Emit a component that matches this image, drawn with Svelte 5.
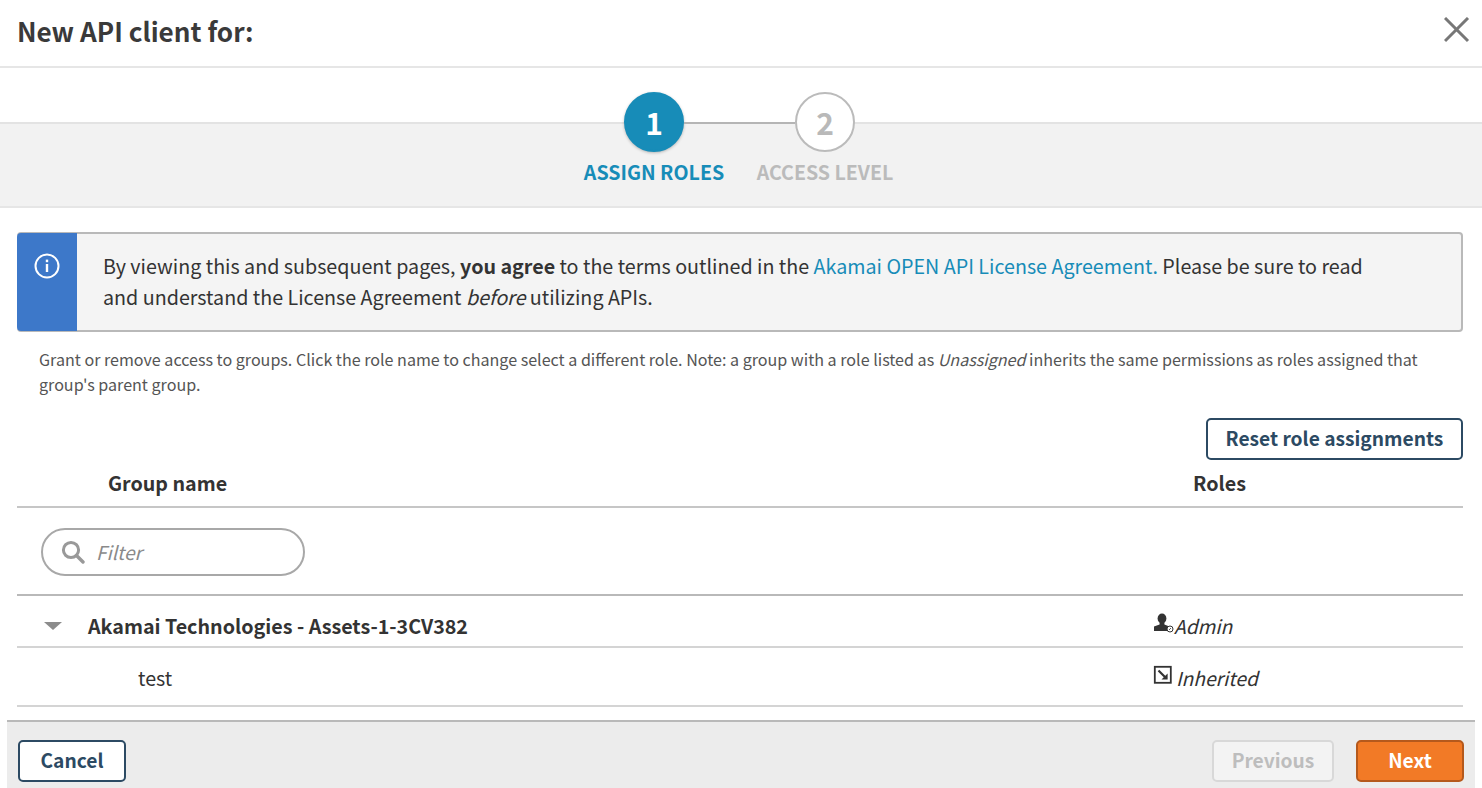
<script>
  const groups = [
    { name: "Akamai Technologies - Assets-1-3CV382", role: "Admin", parent: true },
    { name: "test", role: "Inherited", parent: false }
  ];
</script>

<div class="modal">
  <header class="top">
    <h1>New API client for:</h1>
    <svg class="close" width="26" height="26" viewBox="0 0 26 26" aria-label="Close">
      <path d="M1 1 L24 24 M24 1 L1 24" stroke="#777" stroke-width="3" fill="none" />
    </svg>
  </header>

  <div class="stepper">
    <div class="step active">
      <div class="circle">1</div>
      <div class="label">ASSIGN ROLES</div>
    </div>
    <div class="link"></div>
    <div class="step">
      <div class="circle">2</div>
      <div class="label">ACCESS LEVEL</div>
    </div>
  </div>

  <div class="content">
    <div class="alert">
      <div class="alert-icon">
        <svg width="26" height="26" viewBox="0 0 26 26">
          <circle cx="13" cy="13" r="11.5" stroke="#fff" stroke-width="2" fill="none" />
          <rect x="11.8" y="11" width="2.4" height="8" fill="#fff" />
          <rect x="11.8" y="6.6" width="2.4" height="2.6" fill="#fff" />
        </svg>
      </div>
      <p>
        By viewing this and subsequent pages, <b>you agree</b> to the terms outlined in the
        <a href="#top">Akamai OPEN API License Agreement.</a> Please be sure to read<br />
        and understand the License Agreement <i>before</i> utilizing APIs.
      </p>
    </div>

    <p class="hint">
      Grant or remove access to groups. Click the role name to change select a different role. Note: a group with a role listed as <i>Unassigned</i> inherits the same permissions as roles assigned that group's parent group.
    </p>

    <div class="actions">
      <button class="btn outline reset">Reset role assignments</button>
    </div>

    <div class="thead">
      <div class="col-name">Group name</div>
      <div class="col-role">Roles</div>
    </div>

    <div class="filter-row">
      <div class="filter">
        <svg width="24" height="24" viewBox="0 0 24 24">
          <circle cx="10" cy="10" r="7.6" stroke="#999" stroke-width="3" fill="none" />
          <path d="M15.5 15.5 L22 22" stroke="#999" stroke-width="3.4" stroke-linecap="round" />
        </svg>
        <span>Filter</span>
      </div>
    </div>

    {#each groups as g}
      <div class="row" class:parent={g.parent}>
        {#if g.parent}
          <span class="caret"></span>
        {/if}
        <div class="name">{g.name}</div>
        <div class="role">
          {#if g.parent}
            <svg width="21" height="20" viewBox="0 0 21 20">
              <ellipse cx="9" cy="5.5" rx="4.4" ry="5" fill="#333" />
              <path d="M6.6 9 h4.8 v2.4 l5 2 V18 H1 v-4.6 l5.6 -2 z" fill="#333" />
              <circle cx="17" cy="16" r="3" fill="#fff" stroke="#333" stroke-width="1" />
              <path d="M16 17 L18 15" stroke="#333" stroke-width="0.8" />
            </svg>
          {:else}
            <svg class="inherit" width="20" height="20" viewBox="0 0 20 20">
              <rect x="1.8" y="1.8" width="16" height="16" fill="none" stroke="#333" stroke-width="1.8" />
              <path d="M5.5 5.5 L12.5 12.5" stroke="#333" stroke-width="2.2" />
              <path d="M14.6 8.5 V14.6 H8.5 z" fill="#333" />
            </svg>
          {/if}
          <i>{g.role}</i>
        </div>
      </div>
    {/each}
  </div>

  <footer class="bottom">
    <button class="btn outline cancel">Cancel</button>
    <div class="right">
      <button class="btn disabled">Previous</button>
      <button class="btn primary">Next</button>
    </div>
  </footer>
</div>

<style>
  :global(body) {
    margin: 0;
    background: #fff;
  }
  .modal {
    width: 1482px;
    height: 788px;
    overflow: hidden;
    display: flex;
    flex-direction: column;
    font-family: "Noto Sans CJK SC", "Open Sans", sans-serif;
    font-size: 19.7px;
    color: #333;
  }
  .top {
    height: 61px;
    box-sizing: content-box;
    border-bottom: 2px solid #e6e6e6;
    display: flex;
    align-items: center;
    justify-content: space-between;
    padding: 0 12px 5px 17px;
  }
  h1 {
    margin: 0;
    font-size: 26.1px;
    font-weight: 700;
    line-height: 34px;
    color: #3a3a3a;
  }
  .close {
    margin-top: -2px;
  }
  .stepper {
    height: 114px;
    padding: 24px 3px 0 0;
    border-bottom: 2px solid #e6e6e6;
    display: flex;
    justify-content: center;
    background: linear-gradient(#fff 54px, #e3e3e3 54px, #e3e3e3 56px, #f2f2f2 56px);
  }
  .step {
    width: 60px;
    display: flex;
    flex-direction: column;
    align-items: center;
  }
  .circle {
    width: 60px;
    height: 60px;
    flex: none;
    box-sizing: border-box;
    border-radius: 50%;
    border: 2px solid #bbb;
    background: #fff;
    color: #b9b9b9;
    font-size: 30px;
    font-weight: 700;
    line-height: 56px;
    text-align: center;
  }
  .label {
    margin-top: 6px;
    font-size: 19.6px;
    font-weight: 700;
    line-height: 27px;
    white-space: nowrap;
    color: #bbb;
  }
  .active .circle {
    background: #178cb8;
    border-color: #178cb8;
    color: #fff;
    box-shadow: 0 1px 3px rgba(0, 0, 0, 0.25);
  }
  .active .label {
    color: #178cb8;
  }
  .link {
    width: 111px;
    height: 2px;
    margin-top: 30px;
    background: #b5b5b5;
  }
  .content {
    flex: 1;
    padding: 24px 19px 0 17px;
  }
  .alert {
    height: 100px;
    box-sizing: border-box;
    display: flex;
    border: 2px solid #b9b9b9;
    border-left: 0;
    border-radius: 4px;
    background: #f4f4f4;
  }
  .alert-icon {
    width: 60px;
    margin: -1px 0;
    flex: none;
    border-radius: 4px 0 0 4px;
    background: #3d78c9;
    display: flex;
    justify-content: center;
    padding-top: 20px;
    box-sizing: border-box;
  }
  .alert-icon svg {
    display: block;
  }
  .alert p {
    margin: 0;
    padding: 17px 0 0 26px;
    line-height: 30.5px;
    color: #333;
  }
  .alert a {
    color: #178cb8;
    text-decoration: none;
  }
  .hint {
    margin: 15px 0 0 22px;
    font-size: 16.08px;
    line-height: 25px;
    color: #555;
  }
  .actions {
    display: flex;
    justify-content: flex-end;
    margin-top: 21px;
  }
  .btn {
    font-family: inherit;
    font-size: 19.2px;
    font-weight: 700;
    height: 42px;
    padding: 0;
    border-radius: 5px;
    line-height: 1;
    box-sizing: border-box;
    background: #fff;
  }
  .outline {
    border: 2px solid #2c4a63;
    color: #2c4a63;
  }
  .reset {
    width: 257px;
  }
  .cancel {
    width: 108px;
  }
  .thead {
    display: flex;
    height: 46px;
    padding-bottom: 4px;
    align-items: center;
    border-bottom: 2px solid #c6c6c6;
    font-weight: 700;
    margin-top: 2px;
    box-sizing: border-box;
  }
  .col-name {
    margin-left: 91px;
  }
  .col-role {
    margin-left: auto;
    width: 270px;
  }
  .filter-row {
    height: 88px;
    box-sizing: border-box;
    border-bottom: 2px solid #b9b9b9;
    padding: 20px 0 0 24px;
  }
  .filter {
    width: 264px;
    height: 48px;
    box-sizing: border-box;
    border: 2px solid #a8a8a8;
    border-radius: 24px;
    display: flex;
    align-items: center;
    gap: 11px;
    padding-left: 18px;
    padding-bottom: 2px;
    font-size: 19px;
    font-style: italic;
    color: #8a8a8a;
  }
  .filter svg {
    margin-top: 2px;
  }
  .row {
    position: relative;
    display: flex;
    align-items: center;
    height: 52px;
    padding-top: 2px;
    box-sizing: border-box;
    border-bottom: 2px solid #d4d4d4;
  }
  .row:not(.parent) {
    height: 59px;
  }
  .row.parent {
    padding-top: 8px;
  }
  .name {
    padding-left: 121px;
  }
  .parent .name {
    padding-left: 71px;
    font-weight: 700;
  }
  .caret {
    position: absolute;
    left: 27px;
    top: 26px;
    width: 0;
    height: 0;
    border-left: 9px solid transparent;
    border-right: 9px solid transparent;
    border-top: 8px solid #8c8c8c;
  }
  .role {
    margin-left: auto;
    width: 310px;
    display: flex;
    align-items: center;
    font-size: 19.2px;
  }
  .parent .role {
    padding-top: 1px;
  }
  .role svg {
    margin-top: -5px;
  }
  .role .inherit {
    margin-right: 3px;
  }
  .bottom {
    height: 68px;
    flex: none;
    box-sizing: border-box;
    border-top: 2px solid #b9b9b9;
    margin: 0 7px;
    padding: 18px 11px 0 11px;
    background: #ececec;
    display: flex;
    justify-content: space-between;
    align-items: flex-start;
  }
  .right {
    display: flex;
    gap: 22px;
  }
  .disabled {
    width: 122px;
    border: 2px solid #d8d8d8;
    background: #f3f3f3;
    color: #bdbdbd;
  }
  .primary {
    width: 108px;
    border: 2px solid #b5591c;
    background: #f27a26;
    color: #fff;
  }
</style>
